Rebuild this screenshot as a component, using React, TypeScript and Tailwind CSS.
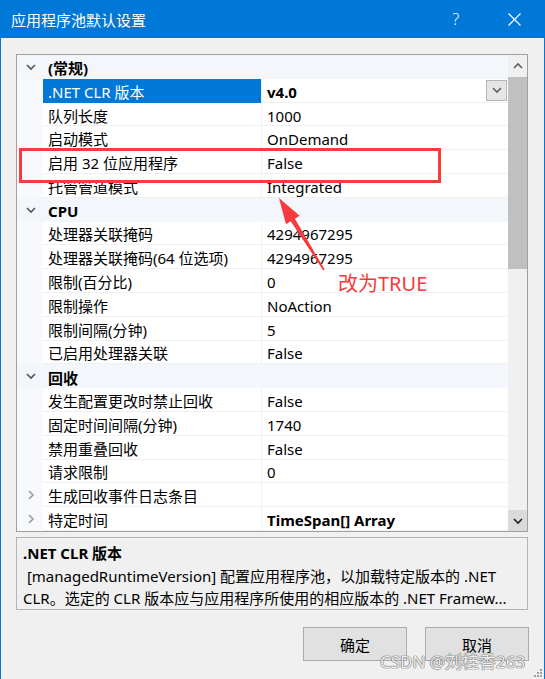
import { ReactNode } from "react";

type Row = {
  label: string;
  value?: string;
  cat?: boolean;
  bold?: boolean;
  selected?: boolean;
  dropdown?: boolean;
  expandable?: boolean;
};

const rows: Row[] = [
  { label: "(常规)", cat: true },
  { label: ".NET CLR 版本", value: "v4.0", bold: true, selected: true, dropdown: true },
  { label: "队列长度", value: "1000" },
  { label: "启动模式", value: "OnDemand" },
  { label: "启用 32 位应用程序", value: "False" },
  { label: "托管管道模式", value: "Integrated" },
  { label: "CPU", cat: true },
  { label: "处理器关联掩码", value: "4294967295" },
  { label: "处理器关联掩码(64 位选项)", value: "4294967295" },
  { label: "限制(百分比)", value: "0" },
  { label: "限制操作", value: "NoAction" },
  { label: "限制间隔(分钟)", value: "5" },
  { label: "已启用处理器关联", value: "False" },
  { label: "回收", cat: true },
  { label: "发生配置更改时禁止回收", value: "False" },
  { label: "固定时间间隔(分钟)", value: "1740" },
  { label: "禁用重叠回收", value: "False" },
  { label: "请求限制", value: "0" },
  { label: "生成回收事件日志条目", value: "", expandable: true },
  { label: "特定时间", value: "TimeSpan[] Array", bold: true, expandable: true },
];

function Chevron({ dir, color }: { dir: "down" | "right" | "up"; color: string }) {
  const d =
    dir === "down" ? "M1 3 L5 7 L9 3" : dir === "up" ? "M1 7 L5 3 L9 7" : "M3 1 L7 5 L3 9";
  return (
    <svg width="10" height="10" viewBox="0 0 10 10">
      <path d={d} fill="none" stroke={color} strokeWidth="1.6" />
    </svg>
  );
}

function GridRow({ row }: { row: Row }) {
  if (row.cat) {
    return (
      <div className="flex h-[23.8px] items-center bg-[#f3f6fb]">
        <div className="flex w-[26px] justify-center pl-[1px]">
          <Chevron dir="down" color="#555555" />
        </div>
        <div className="pl-[5px] pt-[3px] font-bold leading-[20px] text-black">{row.label}</div>
      </div>
    );
  }
  return (
    <div className="flex h-[23.8px]">
      <div className="flex w-[26px] items-center justify-center bg-[#f8f9fc] pl-[1px]">
        {row.expandable && <Chevron dir="right" color="#9a9a9a" />}
      </div>
      <div
        className={
          row.selected
            ? "flex w-[218px] items-center bg-[#0078d7] pl-[5px] text-white"
            : "flex w-[218px] items-center border-b border-[#f0f0f0] pl-[5px] text-black"
        }
      >
        <span className="truncate pt-[3px] leading-[20px]">{row.label}</span>
      </div>
      <div className="flex flex-1 items-center border-b border-l border-[#f0f0f0] pl-[5px] text-black">
        <span className={row.bold ? "flex-1 pt-[3px] font-bold leading-[20px]" : "flex-1 pt-[3px] leading-[20px]"}>
          {row.value}
        </span>
        {row.dropdown && (
          <div className="mr-[1px] flex h-[21px] w-[21px] items-center justify-center border border-[#b4b4b4] bg-[#e6e6e6]">
            <Chevron dir="down" color="#606060" />
          </div>
        )}
      </div>
    </div>
  );
}

function Button({ children }: { children: ReactNode }) {
  return (
    <div className="flex h-[34px] w-[104px] items-center justify-center border border-[#adadad] bg-[#e1e1e1] pt-[2px] text-black">
      {children}
    </div>
  );
}

export default function App() {
  return (
    <div className="relative h-[679px] w-[545px] overflow-hidden border-x border-[#0078d7] bg-[#f0f0f0] text-[15px] leading-none [font-family:'Noto_Sans','Noto_Sans_CJK_SC',sans-serif]">
      {/* title bar */}
      <div className="flex h-[38px] items-center bg-[#0078d7] text-white">
        <div className="flex-1 pl-[10px] pt-[2px] text-[15px]">应用程序池默认设置</div>
        <div className="w-[30px] text-center text-[16px] font-light">?</div>
        <div className="ml-[36px] mr-[23px] flex h-[14px] w-[14px] items-center justify-center">
          <svg width="13" height="13" viewBox="0 0 13 13">
            <path d="M0.5 0.5 L12.5 12.5 M12.5 0.5 L0.5 12.5" stroke="#ffffff" strokeWidth="1.2" />
          </svg>
        </div>
      </div>

      <div className="px-[15px] pt-[16px]">
        {/* property grid */}
        <div className="flex h-[478px] w-[512px] border border-[#a0a0a0] bg-white">
          <div className="flex w-[491px] flex-col">
            {rows.map((r) => (
              <GridRow key={r.label} row={r} />
            ))}
          </div>
          <div className="flex w-[19px] flex-col bg-[#f0f0f0]">
            <div className="flex h-[22px] items-center justify-center">
              <Chevron dir="up" color="#606060" />
            </div>
            <div className="h-[192px] bg-[#c0c0c0]" />
            <div className="flex-1" />
            <div className="flex h-[21px] items-center justify-center bg-[#dadada]">
              <Chevron dir="down" color="#202020" />
            </div>
          </div>
        </div>

        {/* description */}
        <div className="mt-[5px] flex h-[73px] w-[512px] flex-col border border-[#b4b4b4] pl-[6px] pt-[6px] text-black">
          <div className="h-[18px] font-bold leading-[18px]">.NET CLR 版本</div>
          <div className="mt-[3px] h-[22px] leading-[22px] whitespace-pre"> [managedRuntimeVersion] 配置应用程序池，以加载特定版本的 .NET</div>
          <div className="h-[22px] leading-[22px] whitespace-pre">CLR。选定的 CLR 版本应与应用程序所使用的相应版本的 .NET Framew...</div>
        </div>

        {/* buttons */}
        <div className="mt-[17px] flex justify-end gap-[18px]">
          <Button>确定</Button>
          <Button>取消</Button>
        </div>
      </div>

      {/* red annotation */}
      <div className="absolute left-[18px] top-[148px] h-[35px] w-[422px] border-[3px] border-[#f53b3b]" />
      <svg className="pointer-events-none absolute left-0 top-0" width="545" height="679">
        <polygon
          points="278,198 298.6,215.8 293.9,218.7 323.7,269.6 322.3,270.4 289.7,221.3 285,224.2"
          fill="#f53b3b"
        />
      </svg>
      <div className="absolute left-[337px] top-[274px] text-[20px] text-[#f53b3b]">改为TRUE</div>

      {/* watermark */}
      <div className="absolute left-[379px] top-[653px] text-[17px] text-[#eeeeee] [text-shadow:0_0_1px_#666,0_0_1px_#666,0_0_1px_#666]">
        CSDN @刘桂香263
      </div>

      {/* resize grip */}
      <svg className="absolute bottom-[2px] right-[2px]" width="9" height="9" viewBox="0 0 9 9">
        <rect x="7" y="1" width="2" height="2" fill="#a0a0a0" />
        <rect x="4" y="4" width="2" height="2" fill="#a0a0a0" />
        <rect x="7" y="4" width="2" height="2" fill="#a0a0a0" />
        <rect x="1" y="7" width="2" height="2" fill="#a0a0a0" />
        <rect x="4" y="7" width="2" height="2" fill="#a0a0a0" />
        <rect x="7" y="7" width="2" height="2" fill="#a0a0a0" />
      </svg>
    </div>
  );
}
